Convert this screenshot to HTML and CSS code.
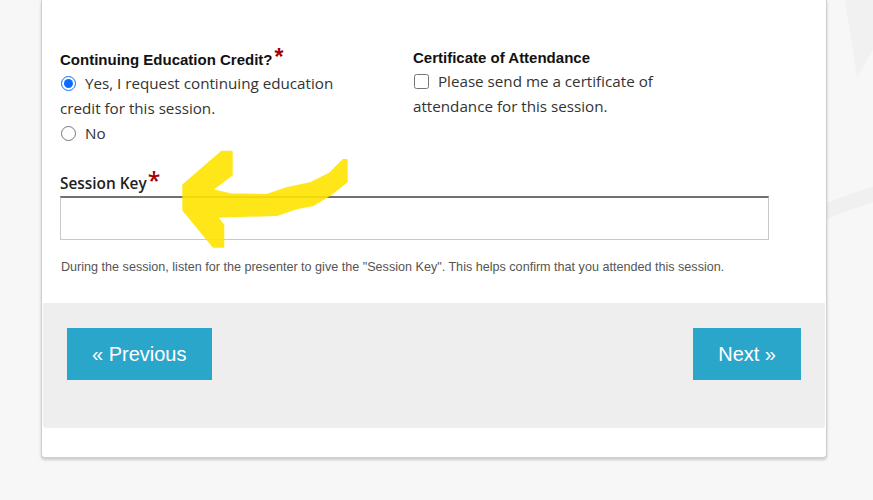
FILE: index.html
```html
<!DOCTYPE html>
<html lang="en">
<head>
    <meta charset="UTF-8">
    <meta name="viewport" content="width=device-width, initial-scale=1.0">
    <title>Session Evaluation</title>
    <link rel="stylesheet" href="styles.css">
</head>
<body>
    <!-- faint watermark behind the card -->
    <svg class="watermark" width="873" height="500" viewBox="0 0 873 500">
        <path d="M828 0 L845 0 L857 77 L873 50 L873 0 Z" fill="#f1f1f1"/>
        <path d="M790 226 Q840 204 900 186" fill="none" stroke="#f0f0f0" stroke-width="15"/>
    </svg>

    <div class="page">
        <div class="card">
            <form class="session-form">
                <div class="row">
                    <div class="col">
                        <div class="field-label">Continuing Education Credit?<span class="req">*</span></div>
                        <label class="option"><input type="radio" name="ce" checked> Yes, I request continuing education credit for this session.</label>
                        <label class="option"><input type="radio" name="ce"> No</label>
                    </div>
                    <div class="col col-right">
                        <div class="field-label">Certificate of Attendance</div>
                        <label class="option"><input type="checkbox" name="cert"> Please send me a certificate of attendance for this session.</label>
                    </div>
                </div>

                <label class="key-label" for="sessionKey">Session Key<span class="req">*</span></label>
                <input type="text" id="sessionKey" class="key-input">
                <p class="help">During the session, listen for the presenter to give the "Session Key". This helps confirm that you attended this session.</p>
            </form>

            <div class="nav-bar">
                <button type="button" class="nav-btn">&laquo; Previous</button>
                <button type="button" class="nav-btn">Next &raquo;</button>
            </div>
        </div>
    </div>

    <!-- hand drawn highlighter arrow -->
    <svg class="marker" width="873" height="500" viewBox="0 0 873 500">
        <polygon fill="#ffe400" stroke="#ffe400" stroke-width="2" stroke-linejoin="round" opacity="0.9"
            points="221.7,151.7 231.7,151.7 231.7,175 211.7,190 230,194.3 266.7,195 286.7,188.3 310,183.3 330,173.3 343.3,160 346.7,160 346.7,181.7 330,195 313.3,205 296.7,208.3 276.7,215 216.7,216.7 223.3,225 223.3,246.7 213.3,246.7 183.3,210 183.3,185"/>
    </svg>
</body>
</html>
```

FILE: styles.css
```css
/* Page */
body {
    margin: 0;
    background-color: #f7f7f7;
    font-family: "Open Sans", Arial, sans-serif;
    color: #333;
    overflow: hidden;
    height: 500px;
    position: relative;
}
.watermark {
    position: absolute;
    top: 0;
    left: 0;
}
.page {
    position: relative;
    padding-left: 41px;
}
/* Card */
.card {
    width: 782px;
    background-color: #fff;
    border: 1px solid #cfcfcf;
    border-top: none;
    border-radius: 0 0 4px 4px;
    box-shadow: 0 2px 3px rgba(0, 0, 0, 0.18);
    padding: 0 1px 29px 1px;
}
.session-form {
    padding: 50px 17px 0 17px;
    width: 709px;
}
.row {
    display: grid;
    grid-template-columns: 353px 1fr;
}
.col {
    max-width: 288px;
}
.col-right {
    margin-top: -2px;
}
.field-label {
    font-family: "Liberation Sans", Arial, sans-serif;
    font-weight: bold;
    font-size: 15px;
    line-height: 20px;
    color: #111;
    margin-bottom: 1px;
}
.req {
    color: #a50000;
    font-size: 23px;
    line-height: 0;
    margin-left: 2px;
}
.option {
    display: block;
    font-size: 15.2px;
    line-height: 25px;
    color: #333;
}
.option input {
    width: 15px;
    height: 15px;
    margin: 0 5px 0 1px;
    vertical-align: -2px;
    accent-color: #0a6cff;
}
/* Session key */
.key-label {
    display: block;
    margin-top: 28px;
    font-weight: 600;
    font-size: 15.4px;
    line-height: 20px;
    color: #222;
}
.key-label .req {
    margin-left: 1px;
}
.key-input {
    display: block;
    box-sizing: border-box;
    width: 709px;
    height: 44px;
    margin: 2px 0 0 0;
    border: 1px solid #c8c8c8;
    border-top: 2px solid #707070;
    background-color: #fff;
}
.help {
    font-family: "Liberation Sans", Arial, sans-serif;
    font-size: 12.6px;
    line-height: 16px;
    color: #555;
    margin: 19px 0 28px 1px;
}
/* Footer navigation */
.nav-bar {
    display: flex;
    justify-content: space-between;
    align-items: flex-start;
    background-color: #eee;
    border-radius: 0 0 3px 3px;
    padding: 25px 24px 48px 24px;
}
.nav-btn {
    font-family: "Liberation Sans", Arial, sans-serif;
    font-size: 20px;
    line-height: 24px;
    color: #fff;
    background-color: #2ba6cb;
    border: none;
    padding: 14px 25px;
    cursor: pointer;
}
.nav-btn:hover {
    background-color: #2284a1;
}
/* Arrow overlay */
.marker {
    position: absolute;
    top: 0;
    left: 0;
    pointer-events: none;
}
```
